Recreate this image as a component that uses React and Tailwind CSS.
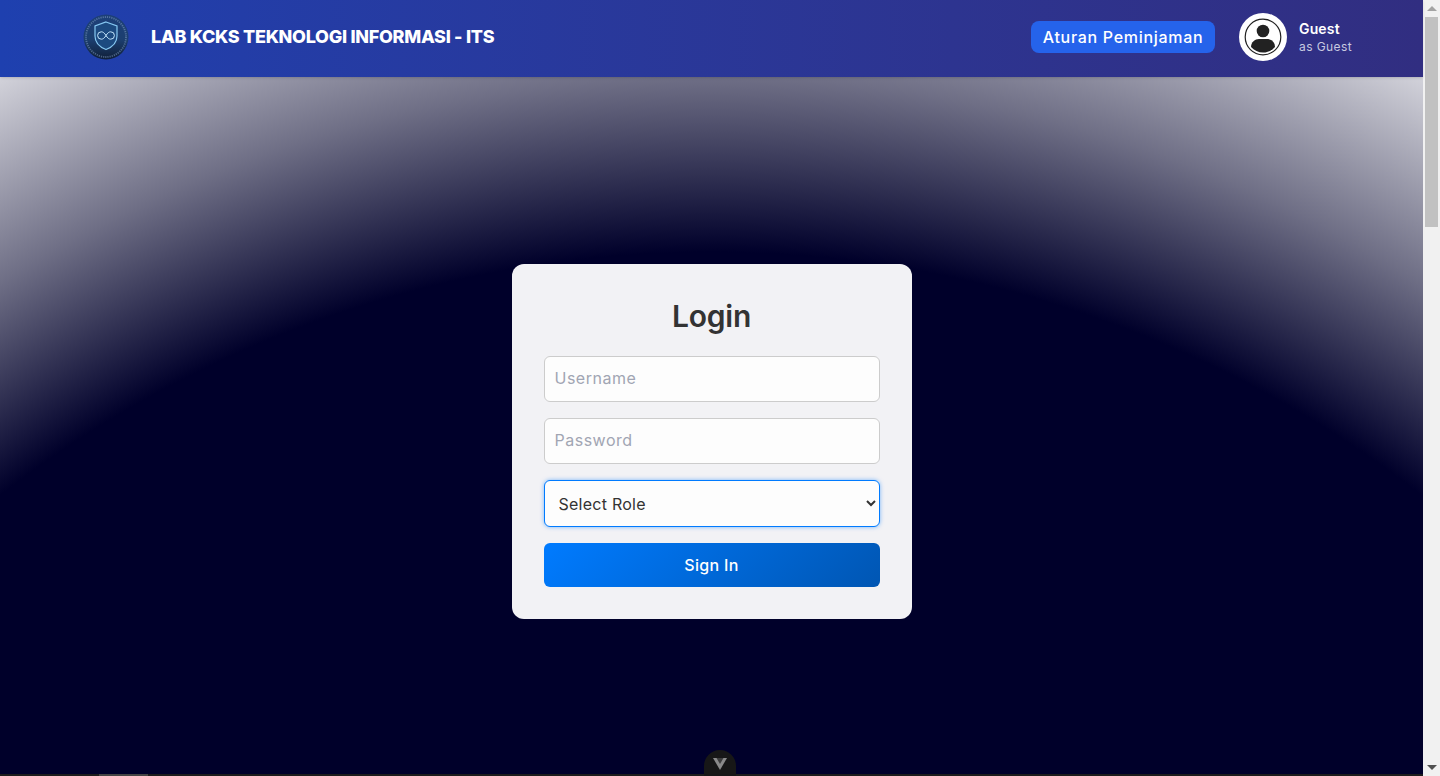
function Logo() {
  return (
    <svg width="46" height="46" viewBox="0 0 46 46" className="shrink-0">
      <defs>
        <linearGradient id="logoBg" x1="0" y1="0" x2="0" y2="1">
          <stop offset="0" stopColor="#1d3f78" />
          <stop offset="0.55" stopColor="#1c3f70" />
          <stop offset="1" stopColor="#101f38" />
        </linearGradient>
      </defs>
      <circle cx="23" cy="23" r="22.5" fill="url(#logoBg)" />
      <circle cx="23" cy="23" r="20" fill="none" stroke="#8aa6c8" strokeWidth="1.8" strokeDasharray="1.2 1" opacity="0.5" />
      <path d="M23 8l11 4v10c0 6.500-4.600 11-11 13.500-6.400-2.500-11-7-11-13.500V12z" fill="#1c4a80" stroke="#86c8f2" strokeWidth="1.200" />
      <path d="M23 21.500c-1.500-2.500-3-3.700-4.700-3.700a3.700 3.700 0 0 0 0 7.400c1.700 0 3.200-1.200 4.700-3.700s3-3.700 4.700-3.700a3.700 3.700 0 0 1 0 7.400c-1.700 0-3.200-1.200-4.700-3.700z" fill="none" stroke="#c4e5fb" strokeWidth="1" />
    </svg>
  );
}

function Avatar() {
  return (
    <div className="w-12 h-12 rounded-full bg-white flex items-center justify-center shrink-0">
      <svg width="38" height="38" viewBox="0 0 38 38">
        <circle cx="19" cy="19" r="17.800" fill="none" stroke="#222" strokeWidth="1.200" />
        <circle cx="19" cy="13" r="6.300" fill="#222" />
        <path d="M7 29c0-5 4-8 8-8h8c4 0 8 3 8 8-3 3.500-7.500 5.500-12 5.500S10 32.500 7 29z" fill="#222" />
      </svg>
    </div>
  );
}

function Header() {
  return (
    <header className="h-[77px] shrink-0 relative z-10 shadow-sm bg-gradient-to-r from-[#1e40af] to-[#312e81] flex items-center justify-between pl-[83px] pr-[71px] pb-[3px]">
      <div className="flex items-center gap-[22px]">
        <Logo />
        <h1 className="text-lg font-extrabold text-white tracking-[-0.3px]">LAB KCKS TEKNOLOGI INFORMASI - ITS</h1>
      </div>
      <div className="flex items-center">
        <button className="h-8 w-[184px] rounded-lg bg-[#2563eb] text-white text-base font-medium tracking-[0.7px] whitespace-nowrap">Aturan Peminjaman</button>
        <div className="ml-6 mr-3">
          <Avatar />
        </div>
        <div className="w-[53px] pt-0.5">
          <p className="text-sm leading-[18px] font-semibold text-white tracking-[0.15px]">Guest</p>
          <p className="text-xs leading-[18px] text-[#c7c9e0] tracking-[0.4px] whitespace-nowrap">as Guest</p>
        </div>
      </div>
    </header>
  );
}

function LoginCard() {
  const field = "w-full h-[46px] rounded-md border border-[#cccccc] bg-[#fdfdfd] px-2.5 pb-0.5 text-base tracking-[0.5px] outline-none placeholder:text-[#a1a5b3]";

  return (
    <div className="w-[400px] h-[355px] rounded-xl bg-[#f2f2f5] p-8">
      <h2 className="text-[30px] leading-[40px] text-center font-semibold text-[#333333] tracking-[-0.2px] mb-5">Login</h2>
      <div className="flex flex-col gap-4">
        <input type="text" placeholder="Username" className={field} />
        <input type="password" placeholder="Password" className={field} />
        <select defaultValue="" className="w-full h-[47px] rounded-md border border-[#007bff] bg-[#fdfdfd] pl-2.5 pr-1 text-base tracking-[0.25px] text-[#333333] outline-none shadow-[0_0_4px_rgba(0,123,255,0.5)]">
          <option value="">Select Role</option>
          <option value="admin">Admin</option>
          <option value="user">User</option>
        </select>
        <button className="w-full h-11 rounded-md bg-[linear-gradient(135deg,#007bff,#0056b3)] text-white text-base font-medium tracking-[0.3px]">Sign In</button>
      </div>
    </div>
  );
}

function Scrollbar() {
  return (
    <div className="w-[17px] shrink-0 bg-[#f1f1f1] flex flex-col items-center">
      <div className="h-[17px] flex items-center justify-center">
        <div className="w-0 h-0 border-x-[5px] border-x-transparent border-b-[5px] border-b-[#a3a3a3]" />
      </div>
      <div className="w-[13px] h-[210px] bg-[#c1c1c1]" />
      <div className="flex-1" />
      <div className="h-[17px] flex items-center justify-center">
        <div className="w-0 h-0 border-x-[5px] border-x-transparent border-t-[5px] border-t-[#505050]" />
      </div>
    </div>
  );
}

export default function App() {
  return (
    <div className="h-screen flex overflow-hidden font-['Inter','Liberation_Sans',sans-serif]">
      <div className="flex-1 min-w-0 flex flex-col relative">
        <Header />
        <main className="flex-1 flex justify-center pt-[187px] bg-[#00002a] bg-[radial-gradient(circle_at_711px_1335px,#00002a_0px,#00002a_1160px,#6f6f86_1335px,#d2d2da_1512px)]">
          <LoginCard />
        </main>
        <div className="h-0.5 shrink-0 bg-[#1c1c1c] pl-[99px]">
          <div className="w-[49px] h-full bg-[#444444]" />
        </div>
        <div className="absolute bottom-0 left-[704px] w-8 h-[26px] rounded-t-full bg-[#171717] flex justify-center pt-2">
          <svg width="14" height="12" viewBox="0 0 14 12">
            <path d="M0 0h14L7 12z" fill="#8a8a8a" />
            <path d="M3.500 0h7L7 6z" fill="#3d3d3d" />
          </svg>
        </div>
      </div>
      <Scrollbar />
    </div>
  );
}
